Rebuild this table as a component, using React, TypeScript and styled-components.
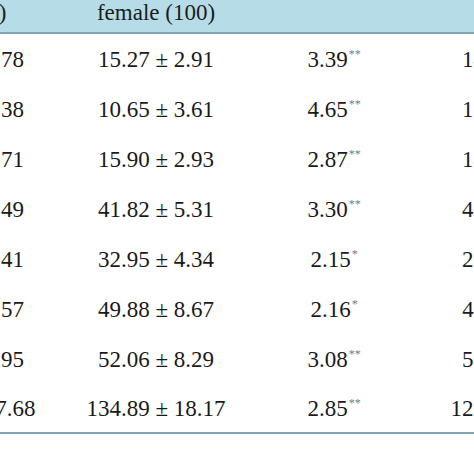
import { FC } from 'react';
import styled, { createGlobalStyle } from 'styled-components';

const GlobalStyle = createGlobalStyle`
    html, body {
        margin: 0;
        padding: 0;
        background: #ffffff;
    }
`;

const serif = `"Liberation Serif", "Times New Roman", serif`;

const Frame = styled.div`
    width: 474px;
    height: 474px;
    overflow: hidden;
    background: #ffffff;
    font-family: ${serif};
`;

const Table = styled.table`
    margin-left: -130px;
    width: 752px;
    table-layout: fixed;
    border-collapse: collapse;
    border-bottom: 2px solid #7ea6b1;
`;

const HeadRow = styled.tr`
    background: #b6dde7;
    border-bottom: 2px solid #7ea6b1;
`;

const HeadCell = styled.th<{ $nudge?: number }>`
    height: 33px;
    padding: 2px ${(p) => p.$nudge ?? 0}px 0 0;
    box-sizing: border-box;
    font-family: ${serif};
    font-size: 23px;
    line-height: 22px;
    font-weight: normal;
    color: #1c1c1c;
    text-align: center;
    vertical-align: top;
    white-space: nowrap;
`;

const Cell = styled.td`
    height: 50px;
    box-sizing: border-box;
    padding: 3px 0 0;
    font-family: ${serif};
    font-size: 23px;
    line-height: 22px;
    color: #1a1a1a;
    text-align: center;
    vertical-align: middle;
    white-space: nowrap;
`;

const Stars = styled.sup`
    font-size: 12px;
    line-height: 0;
    color: #7a7a7a;
    vertical-align: 9px;
    margin-left: 1px;
`;

type Row = {
    male: string;
    female: string;
    t: string;
    stars: string;
    total: string;
};

const rows: Row[] = [
    { male: '16.83 ± 2.78', female: '15.27 ± 2.91', t: '3.39', stars: '**', total: '14.76 ± 2.95' },
    { male: '12.47 ± 3.38', female: '10.65 ± 3.61', t: '4.65', stars: '**', total: '16.12 ± 3.55' },
    { male: '17.12 ± 2.71', female: '15.90 ± 2.93', t: '2.87', stars: '**', total: '14.51 ± 2.87' },
    { male: '43.96 ± 5.49', female: '41.82 ± 5.31', t: '3.30', stars: '**', total: '46.79 ± 5.48' },
    { male: '34.21 ± 4.41', female: '32.95 ± 4.34', t: '2.15', stars: '*', total: '27.58 ± 4.47' },
    { male: '52.63 ± 8.57', female: '49.88 ± 8.67', t: '2.16', stars: '*', total: '47.11 ± 8.86' },
    { male: '55.74 ± 7.95', female: '52.06 ± 8.29', t: '3.08', stars: '**', total: '56.96 ± 8.26' },
    { male: '142.97 ± 17.68', female: '134.89 ± 18.17', t: '2.85', stars: '**', total: '127.42 ± 18.34' },
];

export const App: FC = () => {
    return (
        <Frame>
            <GlobalStyle />
            <Table>
                <colgroup>
                    <col style={{ width: 192 }} />
                    <col style={{ width: 188 }} />
                    <col style={{ width: 168 }} />
                    <col style={{ width: 204 }} />
                </colgroup>
                <thead>
                    <HeadRow>
                        <HeadCell $nudge={8}>male (98)</HeadCell>
                        <HeadCell>female (100)</HeadCell>
                        <HeadCell></HeadCell>
                        <HeadCell></HeadCell>
                    </HeadRow>
                </thead>
                <tbody>
                    {rows.map((r) => (
                        <tr key={r.female}>
                            <Cell>{r.male}</Cell>
                            <Cell>{r.female}</Cell>
                            <Cell>{r.t}<Stars>{r.stars}</Stars></Cell>
                            <Cell>{r.total}</Cell>
                        </tr>
                    ))}
                </tbody>
            </Table>
        </Frame>
    );
};

export default App;
